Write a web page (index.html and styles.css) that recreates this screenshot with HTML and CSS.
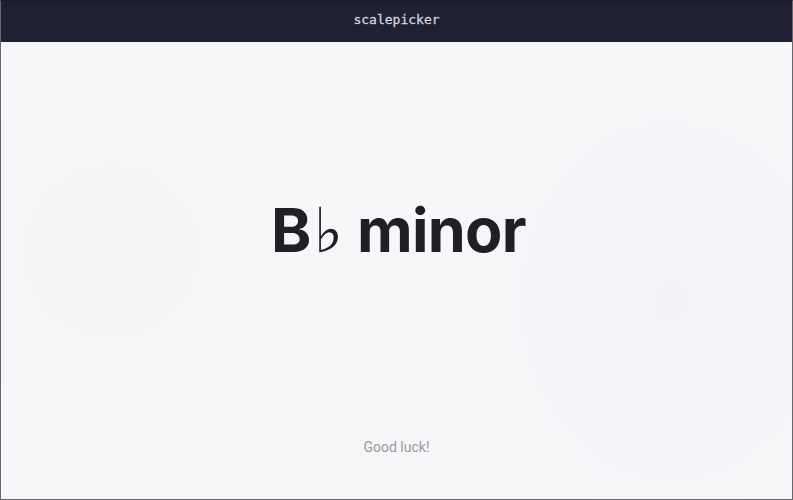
FILE: index.html
```html
<!DOCTYPE html>
<html>
<head>
<meta charset="utf-8">
<link rel="stylesheet" href="styles.css">
</head>
<body>
<div class="app">
  <header class="header"><span class="brand">scalepicker</span></header>
  <main class="main">
    <h1 class="scale"><span class="note">B</span><span class="flat">♭</span> minor</h1>
  </main>
  <footer class="footer">Good luck!</footer>
</div>
</body>
</html>
```
FILE: styles.css
```css
html, body {
  margin: 0;
  padding: 0;
}
.app {
  width: 793px;
  height: 500px;
  box-sizing: border-box;
  border: 1px solid #66666c;
  border-top-color: #1a1b2c;
  display: flex;
  flex-direction: column;
  background:
    radial-gradient(ellipse 220px 260px at 670px 300px, rgba(238, 236, 242, 0.35), rgba(238, 236, 242, 0)),
    radial-gradient(ellipse 180px 180px at 110px 250px, rgba(240, 239, 243, 0.3), rgba(240, 239, 243, 0)),
    #f7f6f9;
}
.header {
  height: 41px;
  box-sizing: border-box;
  padding-bottom: 4px;
  flex: none;
  background: #1f2034;
  display: flex;
  align-items: center;
  justify-content: center;
}
.brand {
  font-family: "DejaVu Sans Mono", "Liberation Mono", monospace;
  font-size: 13px;
  font-weight: 400;
  color: #d4d4dc;
  -webkit-text-stroke: 0.3px #d4d4dc;
}
.main {
  flex: 1;
  display: flex;
  align-items: center;
  justify-content: center;
  padding-bottom: 20px;
}
.scale {
  margin: 0;
  font-family: Inter, "Noto Sans", sans-serif;
  font-weight: 700;
  font-size: 61px;
  color: #202024;
  letter-spacing: -0.7px;
  line-height: 1;
  padding-left: 4px;
}
.flat {
  font-family: "DejaVu Sans", sans-serif;
  font-weight: 400;
  font-size: 62px;
  margin-left: 3px;
  margin-right: 1px;
  color: #202024;
}
.footer {
  flex: none;
  text-align: center;
  font-family: Roboto, "Noto Sans", sans-serif;
  font-size: 14px;
  line-height: 16px;
  color: #9a9a9e;
  padding-bottom: 44px;
}
```
